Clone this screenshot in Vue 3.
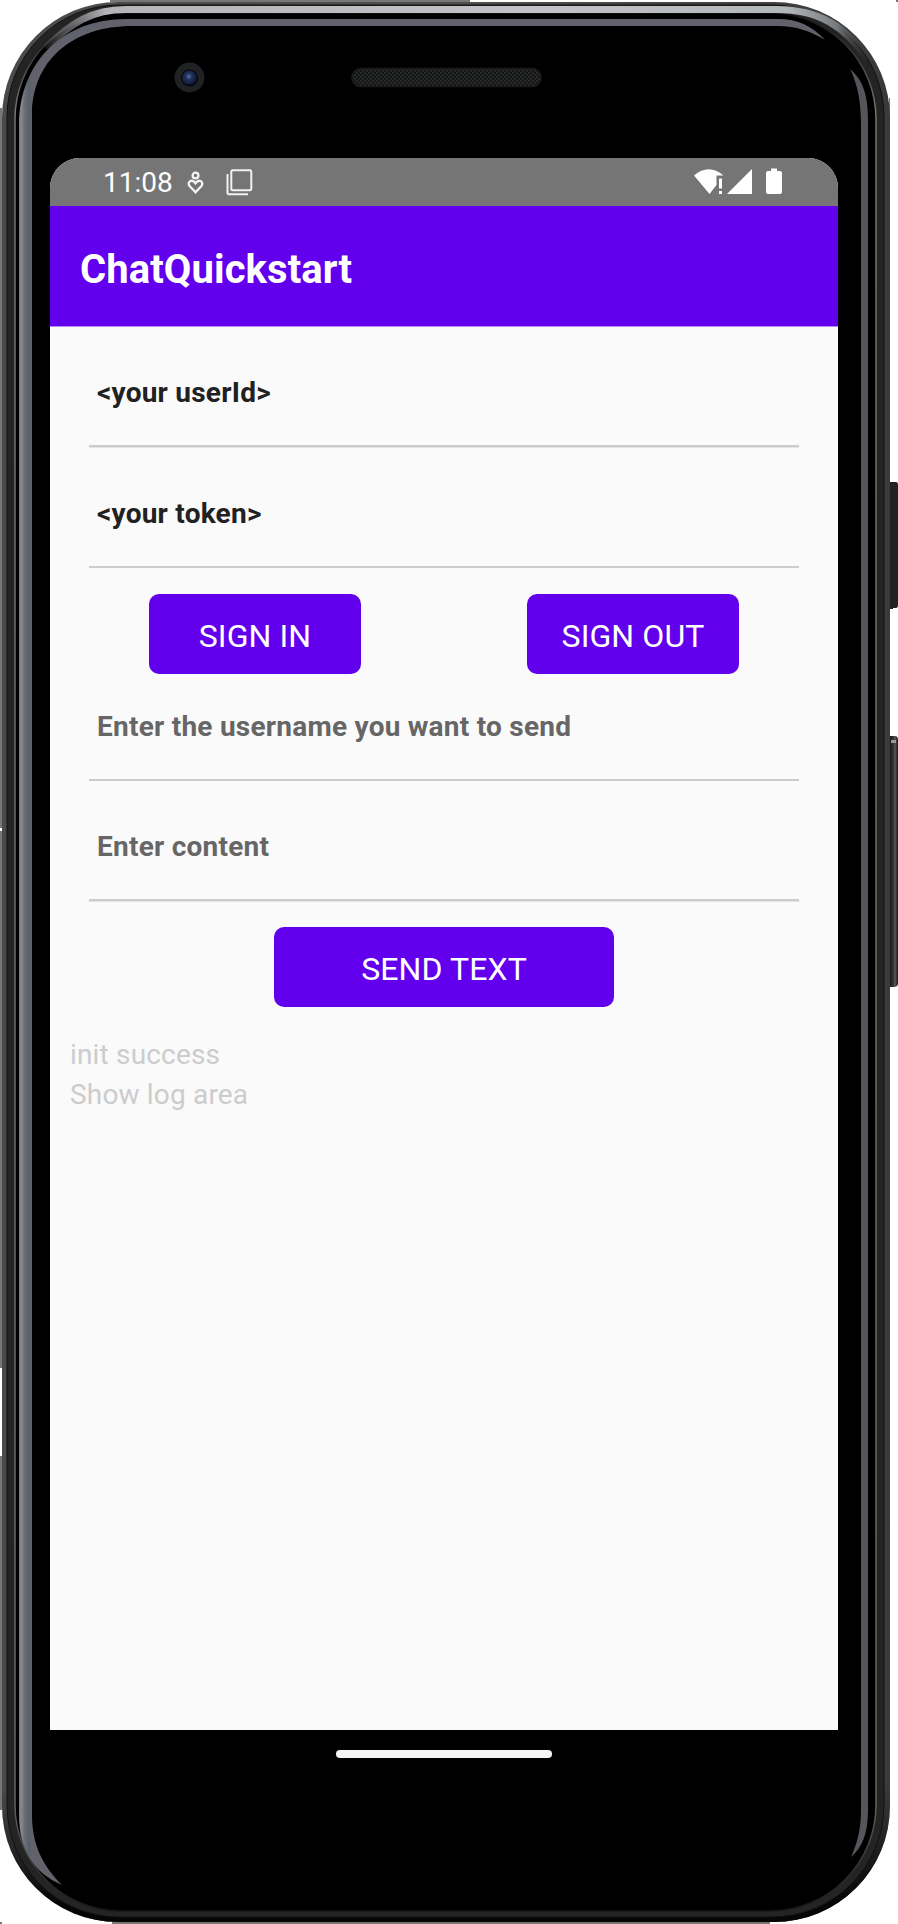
<script setup>
import { ref } from 'vue'

const account = ref([
  { name: 'userId', text: '<your userId>' },
  { name: 'token', text: '<your token>' },
])
const message = ref([
  { name: 'recipient', text: 'Enter the username you want to send' },
  { name: 'content', text: 'Enter content' },
])
const logs = ref(['init success', 'Show log area'])
</script>

<template>
  <div class="phone">
    <svg class="frame" viewBox="0 0 898 1924" width="898" height="1924" aria-hidden="true">
      <defs>
        <linearGradient id="rim" gradientUnits="userSpaceOnUse" x1="40" y1="0" x2="870" y2="0">
          <stop offset="0" stop-color="#b9babd" stop-opacity="0" />
          <stop offset=".035" stop-color="#8d8e91" stop-opacity=".6" />
          <stop offset=".08" stop-color="#b5b5b9" />
          <stop offset=".6" stop-color="#c2c2c8" />
          <stop offset=".9" stop-color="#b2b7b9" />
          <stop offset=".96" stop-color="#777b7d" />
          <stop offset="1" stop-color="#333" stop-opacity="0" />
        </linearGradient>
        <linearGradient id="glow" gradientUnits="userSpaceOnUse" x1="19" y1="0" x2="32" y2="0">
          <stop offset="0" stop-color="#77757a" />
          <stop offset=".15" stop-color="#8b8b8f" />
          <stop offset=".4" stop-color="#6d7079" />
          <stop offset=".75" stop-color="#5b606b" />
          <stop offset="1" stop-color="#62626c" />
        </linearGradient>
        <linearGradient id="band" x1="0" y1="0" x2="1" y2="0">
          <stop offset="0" stop-color="#4a4a4a" />
          <stop offset=".5" stop-color="#505050" />
          <stop offset="1" stop-color="#3c3939" />
        </linearGradient>
        <linearGradient id="bandFade" x1="0" y1="0" x2="0" y2="1">
          <stop offset=".93" stop-color="#060606" stop-opacity="0" />
          <stop offset=".99" stop-color="#060606" />
        </linearGradient>
        <linearGradient id="line" x1="0" y1="0" x2="0" y2="1">
          <stop offset="0" stop-color="#111" />
          <stop offset=".05" stop-color="#737373" />
          <stop offset=".94" stop-color="#666" />
          <stop offset="1" stop-color="#161616" />
        </linearGradient>
        <linearGradient id="key" x1="0" y1="0" x2="1" y2="0">
          <stop offset="0" stop-color="#111" />
          <stop offset=".45" stop-color="#333" />
          <stop offset=".7" stop-color="#555" />
          <stop offset="1" stop-color="#151515" />
        </linearGradient>
        <radialGradient id="lens" cx=".45" cy=".4" r=".6">
          <stop offset="0" stop-color="#5a72a8" />
          <stop offset=".35" stop-color="#22305c" />
          <stop offset=".8" stop-color="#151d3c" />
          <stop offset="1" stop-color="#05070f" />
        </radialGradient>
        <pattern id="mesh" width="4" height="4" patternUnits="userSpaceOnUse">
          <rect width="4" height="4" fill="#151716" />
          <rect width="1.5" height="1.5" fill="#353736" />
          <rect x="2" y="2" width="1.5" height="1.5" fill="#353736" />
        </pattern>
      </defs>

      <g fill="#777">
        <rect x="0" y="108" width="2" height="720" />
        <rect x="0" y="831" width="2" height="537" />
        <rect x="0" y="1456" width="2" height="354" />
        <rect x="110" y="0" width="360" height="2" />
        <rect x="112" y="1922" width="658" height="2" />
        <rect x="896" y="0" width="2" height="2" />
        <rect x="0" y="1922" width="2" height="2" />
        <rect x="889" y="98" width="1" height="1705" />
      </g>

      <path d="M889 482h7q2 0 2 3v120q0 3-2 3h-3v1h-4z" fill="#222" />
      <path d="M889 736h6q3 0 3 4v243q0 4-4 4h-5z" fill="url(#key)" />
      <path d="M891 740h5v3h-5z" fill="#999" />

      <rect x="2" y="2" width="888" height="1920" rx="116" fill="url(#band)" />
      <rect x="2" y="2" width="888" height="1920" rx="116" fill="url(#bandFade)" />
      <rect x="7" y="5" width="877" height="1912" rx="112" fill="#242424" stroke="#111" />
      <rect x="15" y="13" width="861" height="1898" rx="106" fill="#000" stroke="url(#line)" stroke-width="1.5" />
      <rect x="17" y="14" width="857" height="1895" rx="105" fill="#000" />
      <path d="M46 48C70 23 92 9.500 126 9.500H776C820 9.500 846 27 868 60" fill="none" stroke="url(#rim)" stroke-width="7" />

      <path
        d="M825 40C812 26 798 19 778 19H126C62 19 19 63 19 126V1815C19 1850 34 1873 62 1885C42 1865 32 1844 32 1815V115C32 61 72 26 132 26H778C796 26 810 31 825 40z"
        fill="url(#glow)"
      />
      <path d="M850 69C864 81 868 97 868 120V1810C868 1832 863 1847 851 1857C858 1842 861 1827 861 1810V125C861 103 858 85 850 69z" fill="#55555b" />

      <circle cx="189.500" cy="77.500" r="15" fill="#202122" />
      <circle cx="189.500" cy="78" r="8.500" fill="#05060a" />
      <circle cx="189.500" cy="78" r="7.500" fill="url(#lens)" />
      <rect x="352" y="68.500" width="189" height="18" rx="9" fill="url(#mesh)" stroke="#1b1b1b" stroke-width="1.500" />
    </svg>

    <main class="screen">
      <header class="status">
        <span class="clock">11:08</span>
        <svg class="heart" width="18" height="24" viewBox="0 0 18 24" fill="none" stroke="#f4f4f4" stroke-width="2.300">
          <circle cx="8.500" cy="4.500" r="2.900" />
          <path d="M8.500 21.300L2.800 15.300C-.7 11.300 4.800 7.200 8.500 12.300C12.200 7.200 17.700 11.300 14.200 15.300z" />
        </svg>
        <svg class="copy" width="27" height="27" viewBox="0 0 27 27" fill="none" stroke="#f2f2f2" stroke-width="2">
          <rect x="5.300" y="1.300" width="20" height="20" rx="1.500" />
          <path d="M1.500 5V23.700Q1.500 25.200 3 25.200H22" />
        </svg>
        <svg class="signals" width="90" height="28" viewBox="0 0 90 28" fill="#fff">
          <path d="M0 7.500Q14.500 -5 29.500 7.500H22.500V17L15.500 26z" />
          <path d="M25 10.500h3v10h-3zM25 23h3v3h-3z" />
          <path d="M33 26L58 1V26z" />
          <path d="M77 .5h6v2.500h3q2 0 2 2V24q0 2-2 2H74q-2 0-2-2V5q0-2 2-2h3z" />
        </svg>
      </header>

      <div class="appbar"><h1>ChatQuickstart</h1></div>

      <section class="form">
        <div v-for="f in account" :key="f.name" class="field">{{ f.text }}</div>
        <div class="actions">
          <button type="button">SIGN IN</button>
          <button type="button">SIGN OUT</button>
        </div>
        <div v-for="f in message" :key="f.name" class="field hint">{{ f.text }}</div>
        <div class="actions single">
          <button type="button" class="wide">SEND TEXT</button>
        </div>
      </section>

      <section class="log">
        <p v-for="l in logs" :key="l">{{ l }}</p>
      </section>
    </main>
    <div class="home"></div>
  </div>
</template>

<style>
body {
  background: #fff;
}
</style>

<style scoped>
.phone {
  position: relative;
  box-sizing: border-box;
  width: 898px;
  height: 1924px;
  padding: 158px 60px 0 50px;
  overflow: hidden;
  font-family: Roboto, "Liberation Sans", sans-serif;
}
.frame {
  position: absolute;
  inset: 0;
}
.screen {
  position: relative;
  width: 788px;
  height: 1572px;
  background: #fafafa;
  border-radius: 30px 30px 0 0;
  overflow: hidden;
}
.status {
  display: flex;
  box-sizing: border-box;
  height: 48px;
  padding-left: 53px;
  background: #757575;
  color: #fff;
}
.clock {
  width: 71px;
  font-size: 28px;
  line-height: 49px;
  white-space: nowrap;
}
.heart {
  margin: 13px 0 0 13px;
}
.copy {
  margin: 11px 0 0 21px;
}
.signals {
  margin: 10px 0 0 441px;
}
.appbar {
  box-sizing: border-box;
  height: 120px;
  padding: 40px 0 0 30px;
  background: #6200ee;
  border-bottom: 0;
  box-shadow: 0 1px 0 #b68af3;
  color: #fff;
}
h1 {
  margin: 0;
  font-size: 40px;
  font-weight: 700;
  line-height: 48px;
  letter-spacing: 0.08px;
}
.form {
  padding-top: 1px;
}
.field {
  box-sizing: border-box;
  height: 120.5px;
  margin: 0 39px;
  padding: 47px 8px 0;
  background: linear-gradient(#cccccc, #cccccc) 0 118px / 100% 2.5px no-repeat;
  font-size: 28px;
  font-weight: 700;
  line-height: 38px;
  letter-spacing: 0.24px;
  color: #212121;
}
.hint {
  color: #666;
}
.actions {
  display: flex;
  justify-content: space-between;
  height: 66.5px;
  padding: 26px 99px 0;
}
.actions.single {
  justify-content: center;
  height: 80.5px;
  padding-top: 25.5px;
}
button {
  width: 212px;
  height: 80px;
  flex: none;
  padding: 3px 0 0;
  border: 0;
  border-radius: 10px;
  background: #6200ee;
  color: #fff;
  font-family: inherit;
  font-size: 32px;
  line-height: 40px;
  letter-spacing: 0.1px;
}
.wide {
  width: 340px;
}
.log {
  padding: 27px 20px 0;
}
.log p {
  margin: 0;
  font-size: 28px;
  line-height: 40px;
  letter-spacing: 0.17px;
  color: #ccc;
}
.home {
  position: relative;
  width: 216px;
  height: 8px;
  margin: 20px 0 0 286px;
  border-radius: 4px;
  background: #f6f6f6;
}
</style>
